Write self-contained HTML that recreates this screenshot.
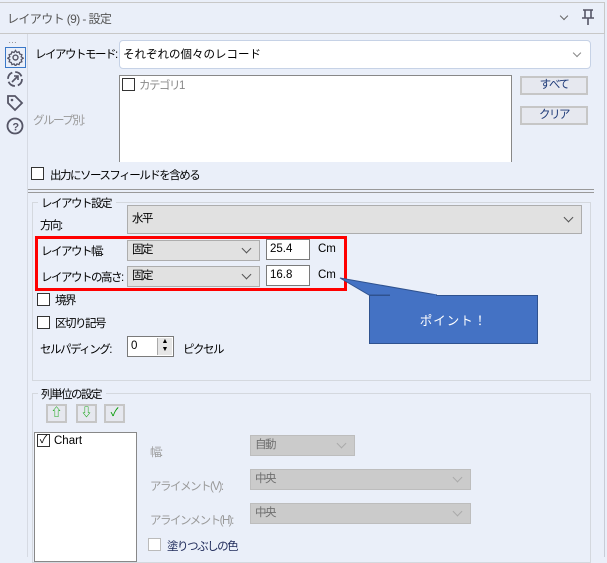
<!DOCTYPE html>
<html><head><meta charset="utf-8"><style>
*{box-sizing:border-box;margin:0;padding:0}
body{width:607px;height:557px;overflow:hidden;background:#eaeff9;font-family:"Liberation Sans","Noto Sans CJK JP",sans-serif;font-size:11.5px;letter-spacing:-1.5px;color:#000;position:relative}
.a{position:absolute;white-space:nowrap}
.n{letter-spacing:0}
.cb{position:absolute;width:13px;height:13px;border:1px solid #333;background:#fff;letter-spacing:0}
.combo{position:absolute;background:#e1e1e1;border:1px solid #adadad;padding:2px 4px;line-height:15px}
.combo::after{content:"";position:absolute;right:9px;top:50%;margin-top:-6px;width:6px;height:6px;border-right:1px solid #555;border-bottom:1px solid #555;transform:rotate(45deg)}
.dis{background:#cbcbcb;border-color:#bdbdbd;color:#707070}
.dis::after{border-color:#aaa}
.tb{position:absolute;background:#fff;border:1px solid #7a7a7a;padding:2px 3px;line-height:14px;letter-spacing:0}
.btn{position:absolute;border:2px solid #c6c6c6;background:#e6e8ef;color:#1e3a78;text-align:center;line-height:14px}
.gl{color:#9a9a9a}
</style></head><body>
<div class="a" style="left:0;top:2px;width:605px;height:32px;border:1px solid #c8c8c8;border-left:none;background:#eaeff9"></div>
<div class="a" style="left:7px;top:10px;color:#555;font-size:12px;letter-spacing:-0.6px">レイアウト (9) - 設定</div>
<div class="a" style="left:561px;top:13px;width:6px;height:6px;border-right:1px solid #666;border-bottom:1px solid #666;transform:rotate(45deg)"></div>
<svg class="a" style="left:581px;top:9px" width="14" height="17" viewBox="0 0 14 17"><path d="M2 1h10M4 1v8M10 1v8M1 9h12M7 9v7" stroke="#556" stroke-width="1.6" fill="none"/></svg>
<div class="a" style="left:604px;top:34px;width:1px;height:523px;background:#c8ccd6"></div>
<div class="a" style="left:27px;top:34px;width:1px;height:523px;background:#d6dae3"></div>
<div class="a n" style="left:8px;top:35px;color:#888;font-size:9px;letter-spacing:1px">…</div>
<div class="a" style="left:5px;top:47px;width:21px;height:21px;border:1px solid #3a78c8"></div>
<svg class="a" style="left:7px;top:49px" width="17" height="17" viewBox="0 0 24 24"><circle cx="12" cy="12" r="3.5" fill="none" stroke="#556" stroke-width="2"/><path d="M12 2l2 3 3-1 1 3 3 1-1 3 3 2-3 2 1 3-3 1-1 3-3-1-2 3-2-3-3 1-1-3-3-1 1-3-3-2 3-2-1-3 3-1 1-3 3 1z" fill="none" stroke="#556" stroke-width="1.8"/></svg>
<svg class="a" style="left:6px;top:70px" width="18" height="18" viewBox="0 0 18 18"><circle cx="9" cy="9" r="7" fill="none" stroke="#556" stroke-width="1.8" stroke-dasharray="8 3"/><path d="M6 12l6-6M8 6h4v4" stroke="#556" stroke-width="1.6" fill="none"/></svg>
<svg class="a" style="left:6px;top:94px" width="18" height="18" viewBox="0 0 18 18"><path d="M2 2h7l7 7-7 7-7-7z" fill="none" stroke="#556" stroke-width="1.8"/><circle cx="6" cy="6" r="1.3" fill="#556"/></svg>
<svg class="a" style="left:6px;top:117px" width="18" height="18" viewBox="0 0 18 18"><circle cx="9" cy="9" r="7.5" fill="none" stroke="#556" stroke-width="1.8"/><text x="9" y="13.5" font-size="11" font-weight="bold" text-anchor="middle" fill="#556" font-family="Liberation Sans">?</text></svg>
<div class="a" style="left:35px;top:46px">レイアウトモード:</div>
<div class="a" style="left:119px;top:40px;width:472px;height:29px;background:#fff;border:1px solid #c6d2e6;border-radius:4px"></div>
<div class="a" style="left:123px;top:46px;letter-spacing:0">それぞれの個々のレコード</div>
<div class="a" style="left:574px;top:50px;width:6px;height:6px;border-right:1px solid #888;border-bottom:1px solid #888;transform:rotate(45deg)"></div>
<div class="a" style="left:119px;top:75px;width:393px;height:87px;background:#fff;border:1px solid #888;border-bottom:none"></div>
<div class="cb" style="left:122px;top:78px"></div>
<div class="a" style="left:139px;top:77px;color:#888">カテゴリ1</div>
<div class="a gl" style="left:33px;top:112px">グループ別:</div>
<div class="btn" style="left:520px;top:76px;width:68px;height:19px">すべて</div>
<div class="btn" style="left:520px;top:106px;width:68px;height:19px">クリア</div>
<div class="cb" style="left:31px;top:167px"></div>
<div class="a" style="left:50px;top:167px">出力にソースフィールドを含める</div>
<div class="a" style="left:28px;top:189px;width:566px;height:4px;border-top:1px solid #999;border-bottom:1px solid #999"></div>
<div class="a" style="left:32px;top:202px;width:559px;height:179px;border:1px solid #d4d8de"></div>
<div class="a" style="left:38px;top:195px;background:#eaeff9;padding:0 5px 0 3px">レイアウト設定</div>
<div class="a" style="left:40px;top:217px">方向:</div>
<div class="combo" style="left:127px;top:205px;width:455px;height:29px;line-height:22px">水平</div>
<div class="a" style="left:35px;top:236px;width:312px;height:55px;border:3px solid #f00"></div>
<div class="a" style="left:41px;top:243px">レイアウト幅:</div>
<div class="combo" style="left:127px;top:240px;width:133px;height:21px">固定</div>
<div class="tb" style="left:266px;top:239px;width:44px;height:21px">25.4</div>
<div class="a n" style="left:318px;top:243px">Cm</div>
<div class="a" style="left:41px;top:269px">レイアウトの高さ:</div>
<div class="combo" style="left:127px;top:266px;width:133px;height:21px">固定</div>
<div class="tb" style="left:266px;top:265px;width:44px;height:21px">16.8</div>
<div class="a n" style="left:318px;top:269px">Cm</div>
<div class="cb" style="left:37px;top:293px"></div>
<div class="a" style="left:55px;top:292px">境界</div>
<div class="cb" style="left:37px;top:316px"></div>
<div class="a" style="left:55px;top:315px">区切り記号</div>
<div class="a" style="left:40px;top:341px">セルパディング:</div>
<div class="tb" style="left:127px;top:336px;width:47px;height:21px">0</div>
<div class="a n" style="left:157px;top:338px;width:15px;height:17px;background:#e6e6e6;border-left:1px solid #aaa;font-size:7px;line-height:8px;text-align:center">▲<br>▼</div>
<div class="a" style="left:183px;top:341px">ピクセル</div>
<svg class="a" style="left:330px;top:270px" width="220" height="80" viewBox="0 0 220 80"><path d="M10 8L107 25H39z" fill="#4472c4" stroke="#2f528f"/><rect x="39.5" y="25.5" width="168" height="48" fill="#4472c4" stroke="#2f528f"/><path d="M60 25.5h46" stroke="#4472c4" stroke-width="2"/></svg>
<div class="a" style="left:369px;top:310px;width:169px;text-align:center;color:#fff;letter-spacing:1px;font-size:12.5px">ポイント！</div>
<div class="a" style="left:32px;top:393px;width:559px;height:170px;border:1px solid #d4d8de"></div>
<div class="a" style="left:38px;top:386px;background:#eaeff9;padding:0 5px 0 3px">列単位の設定</div>
<div class="btn" style="left:46px;top:404px;width:21px;height:19px;color:#2a2;font-weight:bold;line-height:15px;letter-spacing:0">⇧</div>
<div class="btn" style="left:76px;top:404px;width:21px;height:19px;color:#2a2;font-weight:bold;line-height:15px;letter-spacing:0">⇩</div>
<div class="btn" style="left:104px;top:404px;width:21px;height:19px;color:#090;line-height:15px;letter-spacing:0">✓</div>
<div class="a" style="left:34px;top:432px;width:103px;height:130px;background:#fff;border:1px solid #888"></div>
<div class="cb" style="left:37px;top:434px;font-size:11px;line-height:10px;text-align:center">✓</div>
<div class="a n" style="left:54px;top:435px">Chart</div>
<div class="a gl" style="left:150px;top:444px">幅:</div>
<div class="combo dis" style="left:250px;top:435px;width:105px;height:21px">自動</div>
<div class="a gl" style="left:150px;top:478px">アライメント(V):</div>
<div class="combo dis" style="left:250px;top:469px;width:221px;height:21px">中央</div>
<div class="a gl" style="left:150px;top:512px">アラインメント(H):</div>
<div class="combo dis" style="left:250px;top:503px;width:221px;height:21px">中央</div>
<div class="cb" style="left:148px;top:538px;border-color:#bbb"></div>
<div class="a" style="left:167px;top:538px;color:#1e2a5a">塗りつぶしの色</div>
</body></html>
